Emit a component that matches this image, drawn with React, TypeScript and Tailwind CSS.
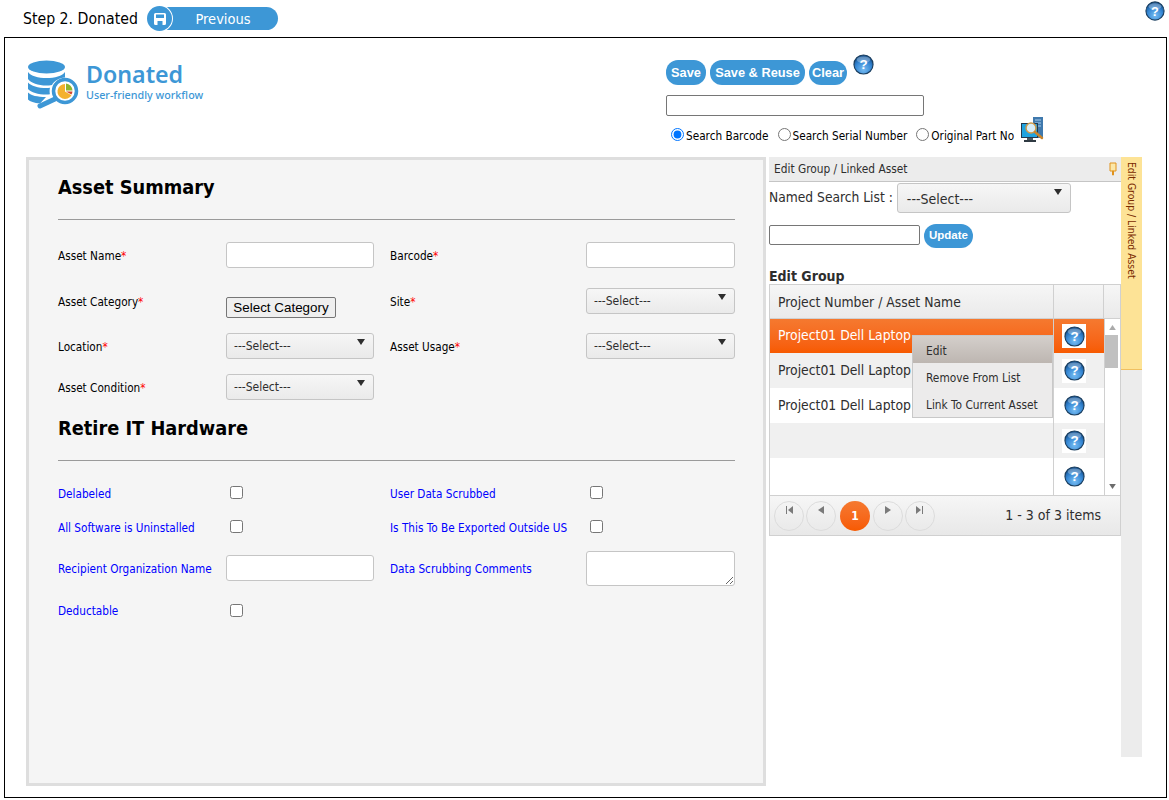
import React from 'react';

const FONT = "font-['DejaVu_Sans_Condensed','DejaVu_Sans',sans-serif]";

function HelpIcon({ className }: { className?: string }) {
  return (
    <svg viewBox="0 0 22 22" className={className}>
      <defs>
        <radialGradient id="helpBlue" cx="50%" cy="75%" r="70%">
          <stop offset="0%" stopColor="#78bdf2" />
          <stop offset="60%" stopColor="#3587d4" />
          <stop offset="100%" stopColor="#14508f" />
        </radialGradient>
      </defs>
      <circle cx="11" cy="11" r="10" fill="url(#helpBlue)" stroke="#1a3e5f" strokeWidth="1.200" />
      <ellipse cx="11" cy="6" rx="7" ry="3.500" fill="#ffffff" opacity="0.300" />
      <text x="11" y="16" textAnchor="middle" fontSize="14" fontWeight="700" fill="#ffffff" fontFamily="Liberation Sans, sans-serif">?</text>
    </svg>
  );
}

function Logo() {
  return (
    <svg viewBox="0 0 54 50" className="w-[54px] h-[50px]">
      <ellipse cx="19.500" cy="7" rx="18.500" ry="6.500" fill="#3d97d6" />
      <path d="M1 12c3 4 10 6 18.500 6S35 16 38 12v5.500C32 18 27 21 25 25c-2 .400-4 .500-5.500 .500C11 25.500 4 23 1 19z" fill="#3d97d6" />
      <path d="M1 22.500c3 3.500 10 5.500 18.500 5.500 1 0 2 0 3.500-.200-.500 2-.500 4-.100 6.500-1.200 .200-2.400 .200-3.400 .200C11 34.500 4 32.500 1 29z" fill="#3d97d6" />
      <path d="M1 32.500c3 3 9 4.500 18 4.500l-6 6.500C7 43 3 41.500 1 39.500z" fill="#3d97d6" />
      <path d="M28 39 L13 46" stroke="#3d97d6" strokeWidth="5" strokeLinecap="round" />
      <circle cx="38" cy="31" r="11.500" fill="#fff" stroke="#3d97d6" strokeWidth="3.500" />
      <path d="M38 31.500V24a7.500 7.500 0 1 0 6.500 11.200z" fill="#f4b12e" />
      <path d="M39 30.500V23.500a7.500 7.500 0 0 1 6.500 7z" fill="#8fb52d" />
      <path d="M39 31.500h6.500a7.500 7.500 0 0 1-1 3z" fill="#d2452c" />
    </svg>
  );
}

function PcSearchIcon() {
  return (
    <svg viewBox="0 0 26 26" className="w-[26px] h-[26px]">
      <rect x="13" y="0" width="10" height="21" fill="#3f79ad" />
      <path d="M15 3h6M15 6h6M15 9h6" stroke="#a9cdea" strokeWidth="1" />
      <rect x="1.500" y="6.500" width="16" height="14" fill="#1fa3e0" stroke="#22384f" />
      <rect x="7" y="21" width="6" height="2" fill="#4d5a62" />
      <rect x="4" y="23" width="12" height="2" fill="#2f3a42" />
      <circle cx="11" cy="11" r="5" fill="#d8eef9" stroke="#cf9a4a" strokeWidth="1.500" />
      <path d="M15 15l7 6" stroke="#c9852c" strokeWidth="2.500" strokeLinecap="round" />
    </svg>
  );
}

function Caret({ className }: { className?: string }) {
  return (
    <svg viewBox="0 0 8 6" className={className}>
      <path d="M0 0h8L4 6z" fill="#2e2e2e" />
    </svg>
  );
}

function SelectBox({ className }: { className?: string }) {
  return (
    <div className={`relative h-[26px] border border-[#c5c5c5] rounded-[3px] bg-gradient-to-b from-[#f6f6f6] to-[#eaeaea] pl-[7px] text-[12px] leading-[24px] text-[#2e2e2e] ${className ?? ''}`}>
      ---Select---
      <Caret className="absolute right-[8px] top-[5px] w-[8px] h-[6px]" />
    </div>
  );
}

function TextBox({ className }: { className?: string }) {
  return <input className={`h-[26px] border border-[#c5c5c5] rounded-[3px] bg-white ${className ?? ''}`} />;
}

function Req() {
  return <span className="text-[#f00]">*</span>;
}

function CheckBox() {
  return <input type="checkbox" className="appearance-none block w-[13px] h-[13px] border border-[#767676] rounded-[2.5px] bg-white ml-[4px]" />;
}

function RowLabel({ children, top, blue }: { children: React.ReactNode; top: string; blue?: boolean }) {
  return <div className={`text-[11.7px] leading-[14px] whitespace-nowrap ${top} ${blue ? 'text-[#0000ff]' : 'text-black'}`}>{children}</div>;
}

const FORM_ROW = 'grid grid-cols-[168px_148px_16px_196px_149px] items-start';

function Radio({ label, checked }: { label: string; checked?: boolean }) {
  return (
    <label className="flex items-center -mb-[1px] text-[11.7px] leading-[14px] text-black">
      <input type="radio" name="searchType" defaultChecked={checked} className="w-[13px] h-[13px] -mt-[3px] mr-[2px] accent-[#0075ff]" />
      {label}
    </label>
  );
}

const GRID_ROWS = [
  { name: 'Project01 Dell Laptop', cls: 'bg-gradient-to-b from-[#f5792f] to-[#f75a00] text-white', h: 'h-[34px]', lh: 'leading-[33px]' },
  { name: 'Project01 Dell Laptop', cls: 'bg-[#f0f0f0] text-[#2e2e2e]', h: 'h-[35px]', lh: 'leading-[34px]' },
  { name: 'Project01 Dell Laptop', cls: 'bg-white text-[#2e2e2e]', h: 'h-[35px]', lh: 'leading-[34px]' },
  { name: '', cls: 'bg-[#f0f0f0]', h: 'h-[35px]', lh: 'leading-[34px]' },
  { name: '', cls: 'bg-white', h: 'h-[37px]', lh: 'leading-[34px]' },
];

function PagerButton({ d }: { d: string }) {
  return (
    <div className="w-[30px] h-[30px] rounded-full border border-[#dcdcdc] flex justify-center pt-[4px]">
      <svg viewBox="0 0 8 8" className="w-[8px] h-[8px]">
        <path d={d} fill="#7a7a7a" />
      </svg>
    </div>
  );
}

export default function App() {
  return (
    <div className={`w-[1169px] h-[800px] bg-white overflow-hidden relative ${FONT}`}>
      {/* top bar */}
      <div className="h-[37px] flex items-start pl-[23px]">
        <span className="w-[124px] text-[15.7px] leading-[20px] mt-[9px] text-black whitespace-nowrap">Step 2. Donated</span>
        <div className="relative mt-[6px] w-[131px] h-[25px]">
          <div className="absolute left-[16px] top-[1px] w-[115px] h-[23px] rounded-r-full bg-[#3d97d6] text-white text-[14.500px] leading-[24px] text-center pl-[5px]">Previous</div>
          <div className="absolute left-0 top-0 w-[25px] h-[25px] rounded-full bg-[#3d97d6] ring-1 ring-white flex items-center justify-center">
            <svg viewBox="0 0 14 14" className="w-[14px] h-[14px]">
              <path d="M1 2.500A1.500 1.500 0 0 1 2.500 1h9A1.500 1.500 0 0 1 13 2.500v9a1.500 1.500 0 0 1-1.500 1.500h-9A1.500 1.500 0 0 1 1 11.500z" fill="#fff" />
              <rect x="3" y="2.500" width="8" height="3.500" fill="#3d97d6" />
              <rect x="4.500" y="9" width="5" height="4" fill="#3d97d6" />
            </svg>
          </div>
        </div>
      </div>
      <HelpIcon className="absolute left-[1145px] top-[1px] w-[20px] h-[20px]" />

      {/* main frame */}
      <div className="ml-[4px] w-[1163px] h-[761px] border border-black">
        <div className="h-[119px] flex">
          <div className="w-[661px] flex items-start pl-[22px] pt-[22px]">
            <Logo />
            <div className="ml-[5px] text-[#3d97d6] font-['Noto_Sans',sans-serif]">
              <div className="text-[23.200px] leading-[28px] font-semibold">Donated</div>
              <div className="text-[10.750px] leading-[14px] font-medium">User-friendly workflow</div>
            </div>
          </div>
          <div className="flex-1">
            <div className="flex items-start mt-[16px] h-[41px]">
              <div className="flex gap-[4px] mt-[6px] font-['Liberation_Sans',sans-serif] font-bold text-[12.800px] text-white">
                <button className="h-[25px] w-[40px] rounded-[12px] bg-[#3d97d6]">Save</button>
                <button className="h-[25px] w-[95px] rounded-[12px] bg-[#3d97d6]">Save &amp; Reuse</button>
                <button className="h-[24px] w-[38px] mt-[1px] rounded-[12px] bg-[#3d97d6]">Clear</button>
              </div>
              <HelpIcon className="ml-[6px] w-[21px] h-[21px]" />
            </div>
            <input className="block h-[21px] w-[258px] border border-[#767676] rounded-[2px] bg-white" />
            <div className="flex items-end ml-[5px] h-[26px]">
              <Radio label="Search Barcode" checked />
              <span className="w-[9px]" />
              <Radio label="Search Serial Number" />
              <span className="w-[9px]" />
              <Radio label="Original Part No" />
              <span className="ml-[6px] -mb-[1px]"><PcSearchIcon /></span>
            </div>
          </div>
        </div>

        <div className="flex items-start pl-[21px]">
          {/* form panel */}
          <div className="w-[740px] h-[629px] border-[3px] border-[#dedede] bg-[#f5f5f5] pl-[29px]">
            <h2 className="text-[19.800px] leading-[28px] font-bold text-black mt-[14px]">Asset Summary</h2>
            <div className="w-[677px] border-t border-[#9a9a9a] mt-[17px] h-[23px]" />
            <div className={`${FORM_ROW} h-[46px]`}>
              <RowLabel top="pt-[7px]">Asset Name<Req /></RowLabel>
              <TextBox className="w-[148px]" />
              <span />
              <RowLabel top="pt-[7px]">Barcode<Req /></RowLabel>
              <TextBox className="w-[149px]" />
            </div>
            <div className={`${FORM_ROW} h-[45px]`}>
              <RowLabel top="pt-[7px]">Asset Category<Req /></RowLabel>
              <button className="mt-[9px] w-[110px] h-[21px] border border-[#767676] rounded-[2px] bg-[#efefef] text-[13.400px] leading-[18px] text-black font-['Liberation_Sans',sans-serif]">Select Category</button>
              <span />
              <RowLabel top="pt-[7px]">Site<Req /></RowLabel>
              <SelectBox />
            </div>
            <div className={`${FORM_ROW} h-[41px]`}>
              <RowLabel top="pt-[7px]">Location<Req /></RowLabel>
              <SelectBox />
              <span />
              <RowLabel top="pt-[7px]">Asset Usage<Req /></RowLabel>
              <SelectBox />
            </div>
            <div className={`${FORM_ROW} h-[26px]`}>
              <RowLabel top="pt-[7px]">Asset Condition<Req /></RowLabel>
              <SelectBox />
            </div>
            <h2 className="text-[19.800px] leading-[28px] font-bold text-black mt-[15px]">Retire IT Hardware</h2>
            <div className="w-[677px] border-t border-[#9a9a9a] mt-[17px] h-[26px]" />
            <div className={`${FORM_ROW} h-[34px]`}>
              <RowLabel top="pt-[1px]" blue>Delabeled</RowLabel>
              <CheckBox />
              <span />
              <RowLabel top="pt-[1px]" blue>User Data Scrubbed</RowLabel>
              <CheckBox />
            </div>
            <div className={`${FORM_ROW} h-[31px]`}>
              <RowLabel top="pt-[1px]" blue>All Software is Uninstalled</RowLabel>
              <CheckBox />
              <span />
              <RowLabel top="pt-[1px]" blue>Is This To Be Exported Outside US</RowLabel>
              <CheckBox />
            </div>
            <div className={`${FORM_ROW} h-[48px]`}>
              <RowLabel top="pt-[11px]" blue>Recipient Organization Name</RowLabel>
              <TextBox className="w-[148px] mt-[4px]" />
              <span />
              <RowLabel top="pt-[11px]" blue>Data Scrubbing Comments</RowLabel>
              <textarea className="block w-[149px] h-[35px] border border-[#c5c5c5] rounded-[3px] bg-white" />
            </div>
            <div className={FORM_ROW}>
              <RowLabel top="pt-[5px]" blue>Deductable</RowLabel>
              <div className="pt-[5px]"><CheckBox /></div>
            </div>
          </div>

          {/* linked asset pane */}
          <div className="ml-[3px] w-[352px] relative">
            <div className="h-[25px] bg-[#ececec] border-b border-[#c5c5c5] flex items-center justify-between pl-[5px] pr-[4px] pt-[2px] text-[11.800px] text-[#2e2e2e]">
              Edit Group / Linked Asset
              <svg viewBox="0 0 8 14" className="w-[8px] h-[14px] -mt-[2px]">
                <path d="M1 1h6v8H1zM3.500 9h1v4h-1z" fill="#fbe7a8" stroke="#e0921c" strokeWidth="1" />
              </svg>
            </div>
            <div className="h-[38px] flex items-start">
              <span className="text-[13.700px] leading-[20px] text-[#2e2e2e] mt-[5px]">Named Search List :</span>
              <SelectBox className="ml-[4px] mt-[1px] w-[174px] !h-[30px] text-[14px] !leading-[30px] !pl-[9px]" />
            </div>
            <div className="flex items-center h-[30px]">
              <input className="w-[151px] h-[20px] border border-[#767676] rounded-[2px] bg-white" />
              <button className="ml-[4px] mt-[1px] w-[49px] h-[24px] rounded-[12px] bg-[#3d97d6] text-white font-bold text-[11.500px] font-['Liberation_Sans',sans-serif]">Update</button>
            </div>
            <div className="text-[14px] leading-[18px] font-bold text-[#2e2e2e] mt-[17px]">Edit Group</div>

            <div className="border-x border-[#d0d0d0] -mt-[1px]">
              <div className="flex h-[35px] border-y border-[#d0d0d0] bg-gradient-to-b from-[#f6f6f6] to-[#eaeaea] text-[13.800px] leading-[35px] text-[#2e2e2e]">
                <div className="w-[284px] border-r border-[#d0d0d0] pl-[8px]">Project Number / Asset Name</div>
                <div className="w-[50px] border-r border-[#d0d0d0]" />
                <div className="flex-1" />
              </div>
              <div className="flex">
                <div className="w-[334px]">
                  {GRID_ROWS.map((row, i) => (
                    <div key={i} className={`flex ${row.h} ${row.cls} text-[13.800px]`}>
                      <div className={`w-[284px] border-r border-[#d0d0d0] pl-[8px] ${row.lh}`}>{row.name}</div>
                      <div className="flex-1 flex pl-[8px] items-center">
                        <div className="w-[24px] h-[24px] bg-white flex items-center justify-center">
                          <HelpIcon className="w-[21px] h-[21px]" />
                        </div>
                      </div>
                    </div>
                  ))}
                </div>
                <div className="flex-1 border-l border-[#d0d0d0] flex flex-col items-center justify-between bg-white py-[6px]">
                  <Caret className="w-[7px] h-[5px] rotate-180 opacity-40" />
                  <div className="absolute left-[336px] top-[178px] w-[13px] h-[33px] bg-[#c0c0c0]" />
                  <Caret className="w-[7px] h-[5px] opacity-70" />
                </div>
              </div>
              <div className="h-[41px] border-y border-[#d0d0d0] bg-gradient-to-b from-[#f6f6f6] to-[#e8e8e8] flex items-center pl-[4px] pr-[19px]">
                <PagerButton d="M1 0h1v8H1zM8 0v8L3 4z" />
                <span className="w-[2px]" />
                <PagerButton d="M7 0v8L1 4z" />
                <span className="w-[4px]" />
                <div className="w-[30px] h-[30px] rounded-full bg-gradient-to-b from-[#f5792f] to-[#f75a00] text-white text-[12px] font-bold text-center leading-[30px]">1</div>
                <span className="w-[3px]" />
                <PagerButton d="M1 0v8l6-4z" />
                <span className="w-[2px]" />
                <PagerButton d="M0 0v8l5-4zM6 0h1v8H6z" />
                <span className="ml-auto text-[14px] text-[#2e2e2e]">1 - 3 of 3 items</span>
              </div>
            </div>

            {/* row context menu */}
            <div className="absolute left-[143px] top-[178px] w-[141px] h-[83px] border border-[#c8c8c8] bg-[#ecebeb] text-[11.800px] text-[#2e2e2e]">
              <div className="h-[27px] pl-[13px] leading-[30px] bg-gradient-to-b from-[#d4cfcb] to-[#bdb6b1]">Edit</div>
              <div className="h-[27px] pl-[13px] leading-[31px]">Remove From List</div>
              <div className="h-[27px] pl-[13px] leading-[31px]">Link To Current Asset</div>
            </div>
          </div>

          {/* collapsed side tab */}
          <div className="w-[21px] h-[600px] bg-[#ececec]">
            <div className="h-[213px] bg-[#fde396] border-b border-[#f0c060] pt-[5px]">
              <span className="block [writing-mode:vertical-rl] text-[10.300px] leading-[21px] text-[#7a2a00] whitespace-nowrap">Edit Group / Linked Asset</span>
            </div>
          </div>
        </div>
      </div>
    </div>
  );
}
